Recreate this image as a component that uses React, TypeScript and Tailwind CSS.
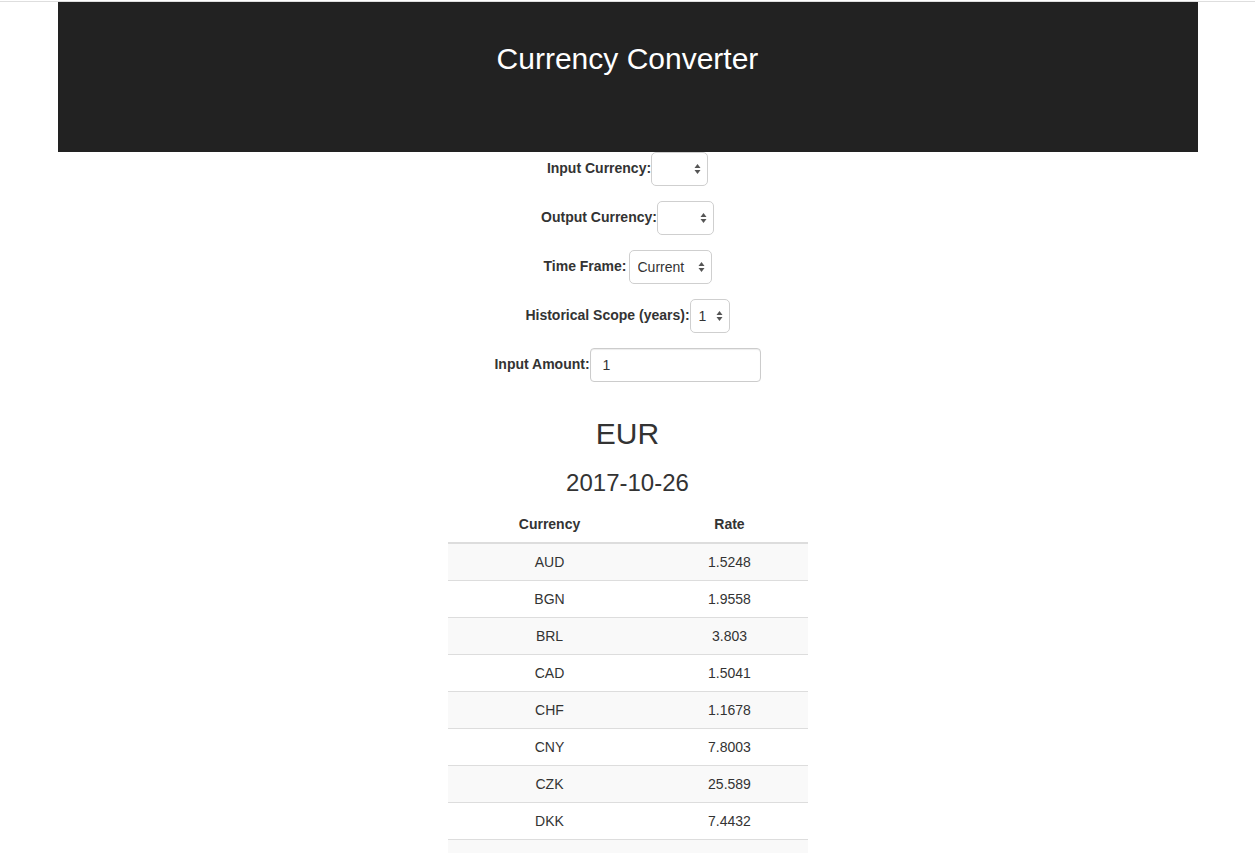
import React from "react";

const rates: [string, string][] = [
  ["AUD", "1.5248"],
  ["BGN", "1.9558"],
  ["BRL", "3.803"],
  ["CAD", "1.5041"],
  ["CHF", "1.1678"],
  ["CNY", "7.8003"],
  ["CZK", "25.589"],
  ["DKK", "7.4432"],
  ["GBP", "0.88693"],
  ["HKD", "9.1705"],
  ["HRK", "7.5205"],
  ["HUF", "311.33"],
  ["IDR", "15975.0"],
  ["ILS", "4.1253"],
  ["INR", "76.294"],
  ["JPY", "133.81"],
];

const Arrows = () => (
  <svg
    className="pointer-events-none absolute right-[7px] top-1/2 -translate-y-1/2"
    width="7"
    height="11"
    viewBox="0 0 7 11"
  >
    <path d="M3.5 0.5 L6.5 4.5 L0.5 4.5 Z" fill="#555" />
    <path d="M3.5 10.5 L6.5 6.5 L0.5 6.5 Z" fill="#555" />
  </svg>
);

const Select = ({ width, value, options }: { width: string; value: string; options: string[] }) => (
  <div className={`relative ${width} h-[34px]`}>
    <select
      defaultValue={value}
      className="h-full w-full appearance-none rounded-[5px] border border-[#cfcfcf] bg-white pl-[8px] pr-5 text-[14px] text-[#333] outline-none"
    >
      {options.map((o) => (
        <option key={o} value={o}>
          {o}
        </option>
      ))}
    </select>
    <Arrows />
  </div>
);

const Row = ({ label, children }: { label: string; children: React.ReactNode }) => (
  <div className="mb-[15px] flex h-[34px] items-center justify-center">
    <label className="pb-[2px] text-[14px] font-bold text-[#333]">{label}</label>
    {children}
  </div>
);

export default function App() {
  return (
    <div className="min-h-screen bg-white font-['Liberation_Sans',Arial,Helvetica,sans-serif] text-[#333]">
      <div className="h-px bg-white" />
      <div className="h-px bg-[#dedede]" />
      <div className="mx-auto h-[150px] w-[1140px] bg-[#222] pt-[40px] text-center">
        <h1 className="text-[30px] leading-[33px] text-white">Currency Converter</h1>
      </div>

      <div className="flex flex-col">
        <Row label="Input Currency:">
          <Select width="w-[57px]" value="" options={[""]} />
        </Row>
        <Row label="Output Currency:">
          <Select width="w-[57px]" value="" options={[""]} />
        </Row>
        <Row label="Time Frame:">
          <div className="ml-[2px]">
            <Select width="w-[83px]" value="Current" options={["Current", "Historical"]} />
          </div>
        </Row>
        <Row label="Historical Scope (years):">
          <Select width="w-[40px]" value="1" options={["1", "2", "3", "4", "5"]} />
        </Row>
        <Row label="Input Amount:">
          <input
            defaultValue="1"
            className="h-[34px] w-[171px] rounded-[4px] border border-[#ccc] bg-white px-[12px] text-[14px] text-[#333] shadow-[inset_0_1px_1px_rgba(0,0,0,0.075)] outline-none"
          />
        </Row>
      </div>

      <h2 className="mt-[20px] text-center text-[30px] leading-[33px]">EUR</h2>
      <h3 className="mt-[20px] text-center text-[24px] leading-[26px]">2017-10-26</h3>

      <table className="mx-auto mt-[10px] w-[360px] border-collapse text-[14px] leading-[20px]">
        <thead>
          <tr className="border-b-2 border-[#ddd]">
            <th className="w-[204px] p-[8px] text-center font-bold">Currency</th>
            <th className="w-[156px] p-[8px] text-center font-bold">Rate</th>
          </tr>
        </thead>
        <tbody>
          {rates.map(([c, r], i) => (
            <tr key={c} className={`border-b border-[#ddd] ${i % 2 === 0 ? "bg-[#f9f9f9]" : "bg-white"}`}>
              <td className="p-[8px] text-center">{c}</td>
              <td className="p-[8px] text-center">{r}</td>
            </tr>
          ))}
        </tbody>
      </table>
    </div>
  );
}
